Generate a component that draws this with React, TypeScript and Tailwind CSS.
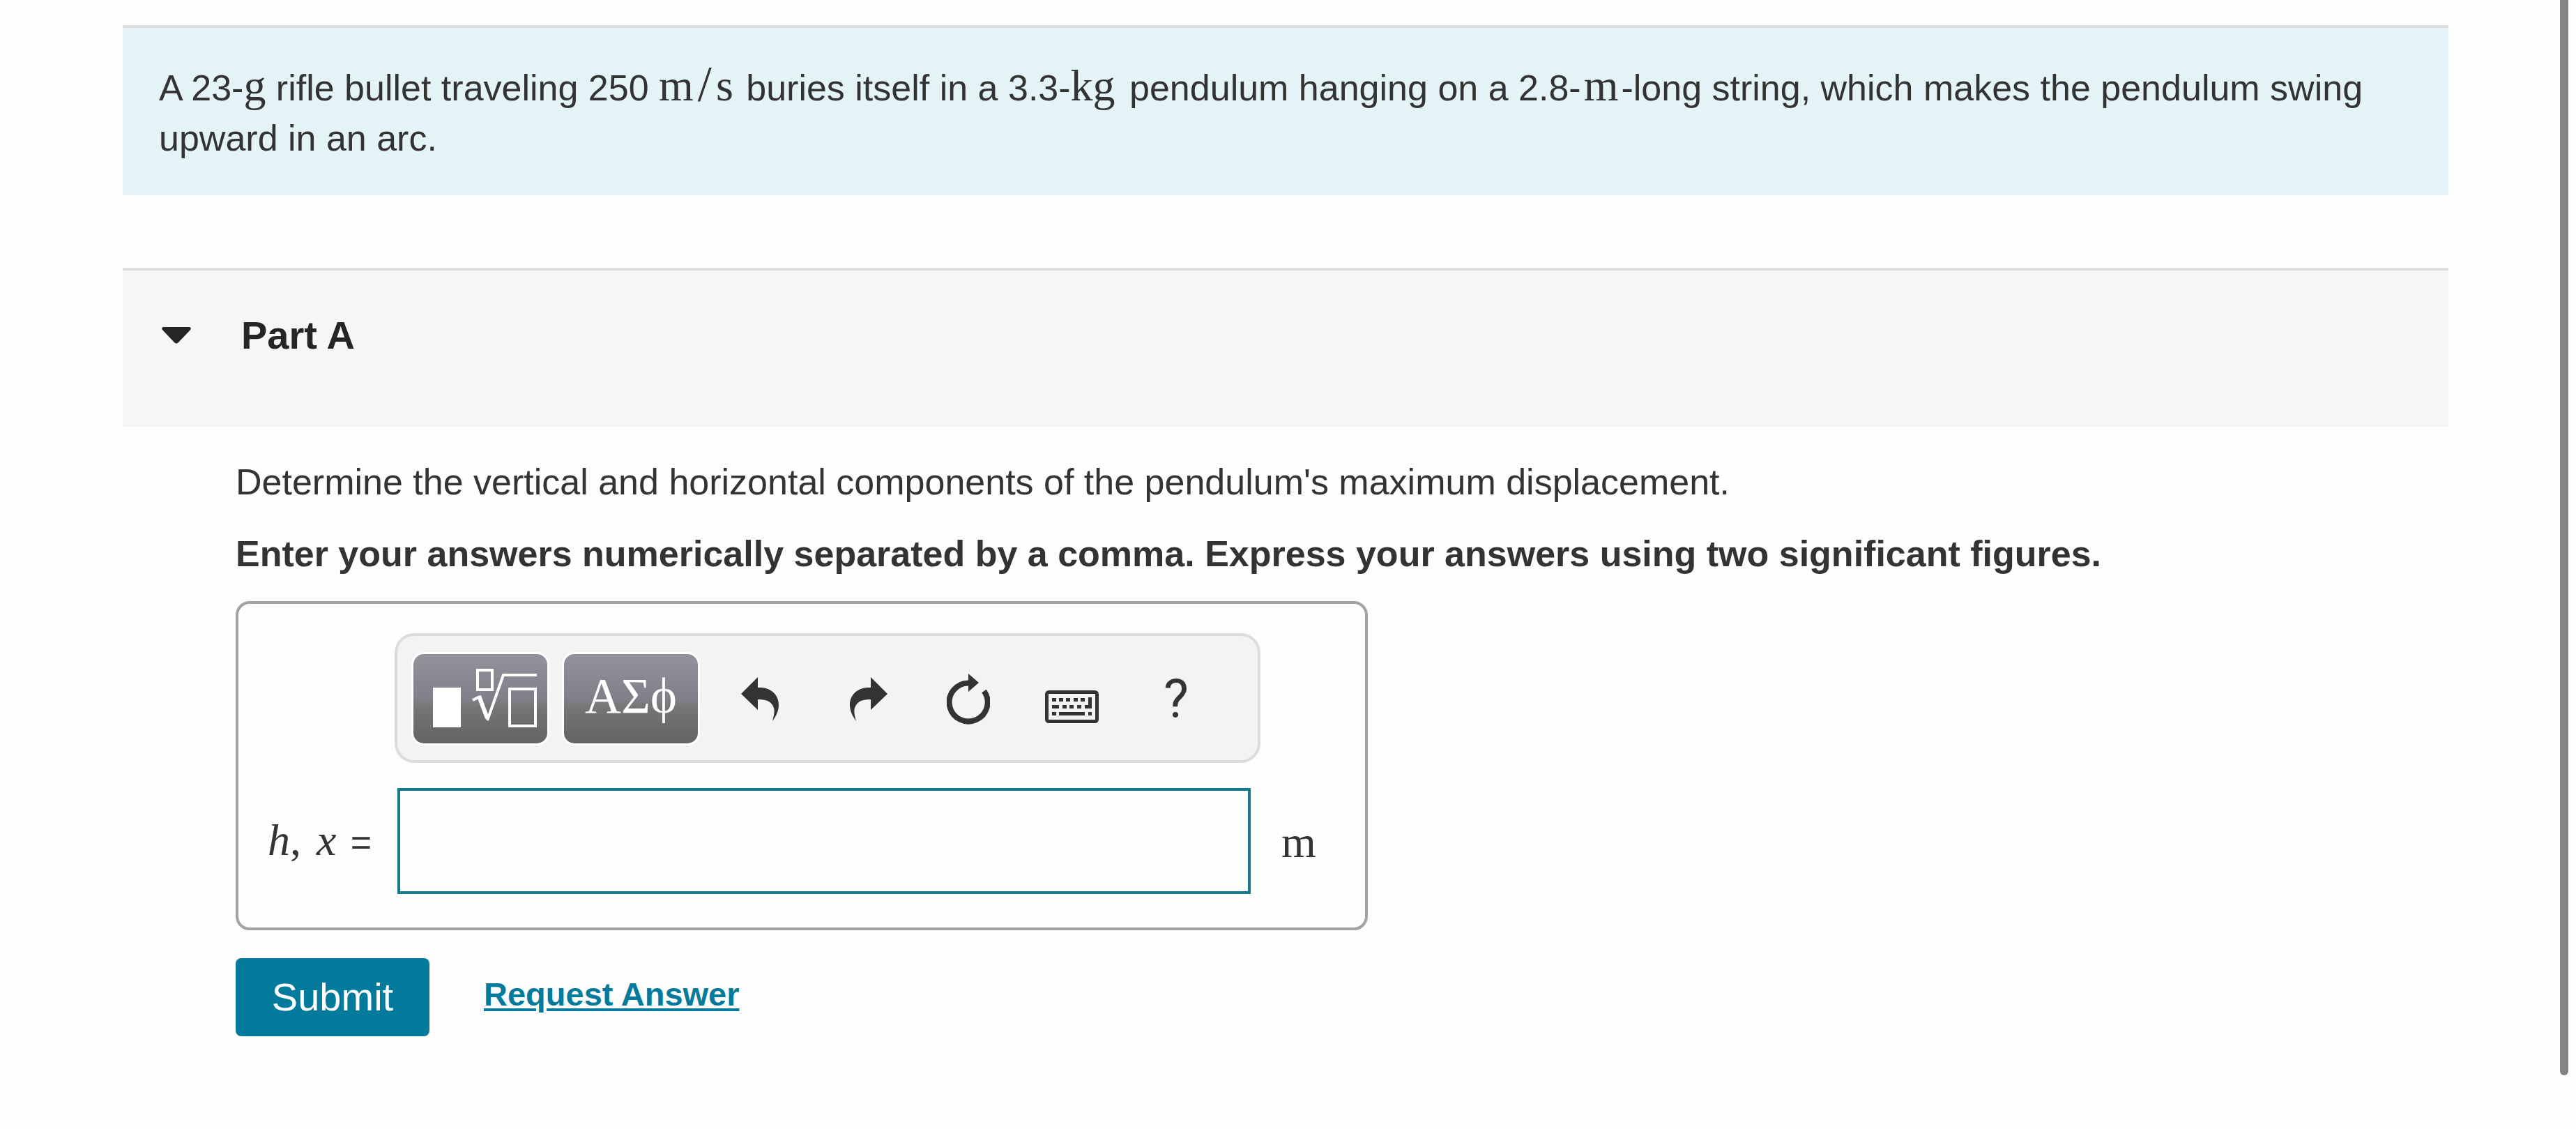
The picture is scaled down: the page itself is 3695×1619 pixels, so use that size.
import React, { useState } from 'react'

function Unit({ children, className = '' }: { children: React.ReactNode; className?: string }) {
  return <span className={`font-['Liberation_Serif',serif] text-[64px] leading-none ${className}`}>{children}</span>
}

function TemplatesIcon() {
  return (
    <svg viewBox="0 0 192 128" className="h-[128px] w-[192px]" fill="none" stroke="white" aria-hidden="true">
      <rect x="28" y="48" width="40" height="57" fill="white" stroke="none" />
      <rect x="92" y="23" width="21" height="28" strokeWidth="4" />
      <path d="M85 66L95 61" strokeWidth="4" />
      <path d="M94 60L106 92" strokeWidth="6" />
      <path d="M106 95L129 30H177" strokeWidth="4" />
      <rect x="138" y="50" width="37" height="53" strokeWidth="4" />
    </svg>
  )
}

function UndoIcon({ flip = false }: { flip?: boolean }) {
  return (
    <svg viewBox="0 0 54 63" className={`h-[63px] w-[54px] ${flip ? '-scale-x-100' : ''}`} fill="#333333" aria-hidden="true">
      <path d="M0 24L24 0V15H29C44 16 54 26 54 40C54 49 50 56 45 63C48 52 49 46 45 40C41 34 35 32 24 32V47Z" />
    </svg>
  )
}

function ResetIcon() {
  return (
    <svg viewBox="0 0 62 73" className="h-[73px] w-[62px]" fill="none" aria-hidden="true">
      <path d="M53.5 25A27.5 27.5 0 1 1 31 13.5" stroke="#333333" strokeWidth="8" />
      <path d="M31 0L46 13L31 26Z" fill="#333333" />
    </svg>
  )
}

function KeyboardIcon() {
  return (
    <svg viewBox="0 -23 77 70" className="h-[70px] w-[77px]" fill="#333333" aria-hidden="true">
      <rect x="2.5" y="2.5" width="72" height="42" rx="3" fill="none" stroke="#333333" strokeWidth="5" />
      <path d="M10 11h6v5h-6zM20 11h6v5h-6zM30 11h6v5h-6zM41 11h6v5h-6zM51 11h6v5h-6z" />
      <path d="M62 10h5v16h-10v-5h5z" />
      <path d="M10 21h10v5h-10zM25 21h6v5h-6zM35 21h6v5h-6zM46 21h6v5h-6z" />
      <path d="M10 31h6v5h-6zM20 31h37v5h-37zM62 31h5v5h-5z" />
    </svg>
  )
}

const paletteButton =
  'flex h-[134px] w-[198px] items-center justify-center overflow-hidden rounded-[18px] border-[3px] border-white bg-[linear-gradient(#94929b,#81808a_50%,#757575_60%,#636363)] text-white'

function Toolbar() {
  return (
    <div className="ml-[224px] flex w-[1242px] items-center rounded-[28px] border-4 border-[#dcdcdc] bg-[#f3f3f3] pt-[23px] pb-[21px] pl-5 text-[#333333]">
      <button type="button" aria-label="Templates" className={paletteButton}>
        <TemplatesIcon />
      </button>
      <button type="button" aria-label="Symbols" className={`${paletteButton} ml-[18px] pb-2 font-['Liberation_Serif',serif] text-[72px] leading-none`}>
        ΑΣϕ
      </button>
      <button type="button" aria-label="Undo" className="ml-2 flex h-[128px] w-[156px] items-center justify-center">
        <UndoIcon />
      </button>
      <button type="button" aria-label="Redo" className="flex h-[128px] w-[156px] items-center justify-center">
        <UndoIcon flip />
      </button>
      <button type="button" aria-label="Reset" className="flex h-[128px] w-[130px] items-center justify-center">
        <ResetIcon />
      </button>
      <button type="button" aria-label="Keyboard shortcuts" className="flex h-[128px] w-[166px] items-center justify-center">
        <KeyboardIcon />
      </button>
      <button type="button" aria-label="Help" className="flex h-[128px] w-[134px] items-center justify-center font-[Roboto,sans-serif] text-[76px] leading-none">
        ?
      </button>
    </div>
  )
}

export default function App() {
  const [open, setOpen] = useState(true)
  const [answer, setAnswer] = useState('')

  return (
    <div className="flex min-h-screen bg-[#fdfdfd] font-['Liberation_Sans',Arial,sans-serif] text-[52px] leading-[72px] text-[#333333]">
      <main className="min-w-0 flex-1 pt-9 pr-[183px] pl-[176px]">
        <section className="border-t-4 border-[#dbdfdd] bg-[#e4f3f6] px-[52px] pt-[50px] pb-[46px]">
          <p>
            A 23-<Unit>g</Unit> rifle bullet traveling 250{' '}
            <Unit className="mr-1">
              m<span className="mx-1.5 text-[72px] leading-10">/</span>s
            </Unit>{' '}
            buries itself in a 3.3-<Unit className="mr-1.5">kg</Unit> pendulum hanging on a 2.8-<Unit className="mx-1">m</Unit>-long
            string, which makes the pendulum swing upward in an arc.
          </p>
        </section>

        <section className="mt-[104px]">
          <h2 className="border-t-4 border-[#dddddd] bg-[#f6f6f6] pt-[61px] pb-[99px] pl-14">
            <button
              type="button"
              aria-expanded={open}
              onClick={() => setOpen(!open)}
              className="flex items-center gap-[72px] text-[56px] leading-[64px] font-bold text-[#252525]"
            >
              <svg viewBox="0 0 42 24" className={`h-6 w-[42px] ${open ? '' : '-rotate-90'}`} fill="#252525" aria-hidden="true">
                <path d="M2 0H40Q43 1 41 4L24 22Q21 25 18 22L1 4Q-1 1 2 0Z" />
              </svg>
              Part A
            </button>
          </h2>

          {open && (
            <form className="pt-[43px] pl-[162px]" onSubmit={(e) => e.preventDefault()}>
              <p>Determine the vertical and horizontal components of the pendulum's maximum displacement.</p>
              <p className="mt-[31px] font-bold">
                Enter your answers numerically separated by a comma. Express your answers using two significant figures.
              </p>

              <div className="mt-8 w-fit rounded-[20px] border-4 border-[#a3a3a3] pt-[42px] pb-12">
                <Toolbar />
                <div className="mt-9 flex items-center">
                  <label htmlFor="answer" className="w-[228px] pt-1 pl-[42px] whitespace-nowrap">
                    <span className="font-['Liberation_Serif',serif] text-[64px] leading-none">
                      <i>h</i>, <i className="mx-1.5">x</i>
                    </span>{' '}
                    =
                  </label>
                  <input
                    id="answer"
                    type="text"
                    value={answer}
                    onChange={(e) => setAnswer(e.target.value)}
                    className="h-[152px] w-[1224px] border-4 border-[#147a8c] bg-[#fdfdfd] px-6 outline-none"
                  />
                  <span className="w-[164px] pt-1 pl-11 font-['Liberation_Serif',serif] text-[64px]">m</span>
                </div>
              </div>

              <div className="mt-10 flex items-center">
                <button type="submit" className="h-[112px] w-[278px] rounded-lg bg-[#047a9c] text-[56px] text-white">
                  Submit
                </button>
                <a href="#" className="ml-[78px] pb-2 text-[47px] font-bold text-[#047a9c] underline decoration-4 underline-offset-4">
                  Request Answer
                </a>
              </div>
            </form>
          )}
        </section>
      </main>

      <div className="-ml-[23px] flex w-[23px] flex-col pb-[77px]" aria-hidden="true">
        <div className="w-3 flex-1 rounded-b-full bg-[#848484]" />
      </div>
    </div>
  )
}
